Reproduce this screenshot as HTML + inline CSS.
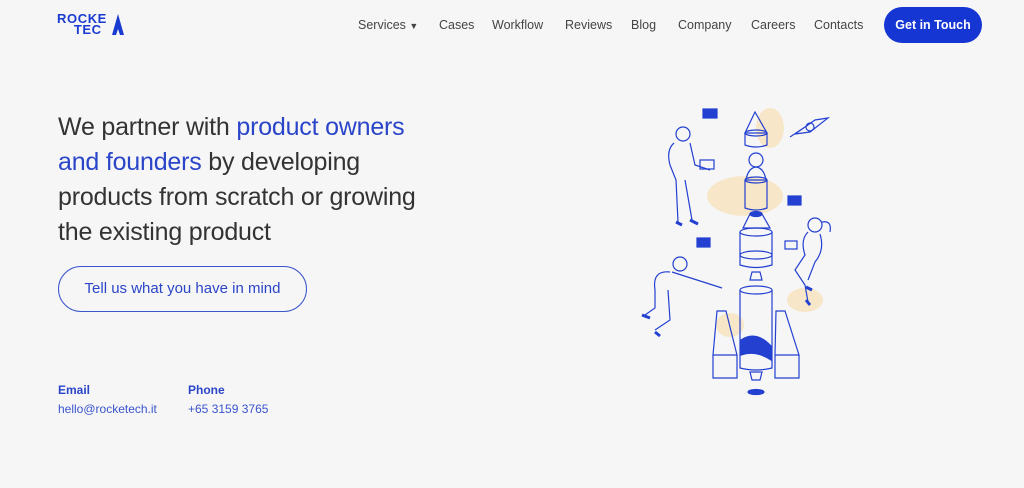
<!DOCTYPE html>
<html><head><meta charset="utf-8"><style>
body{margin:0;width:1024px;height:488px;background:#f6f6f7;font-family:"Liberation Sans",sans-serif;overflow:hidden;position:relative;color:#333}
.logo{position:absolute;left:57px;top:13px;color:#1a3bd1;font-weight:900;font-size:13px;line-height:11px;letter-spacing:.6px}
nav{position:absolute;top:18px;left:358px;font-size:12.5px;color:#444}
nav span{position:absolute;white-space:nowrap}
.btn{position:absolute;left:884px;top:7px;width:98px;height:36px;border-radius:18px;background:#1636d4;color:#fff;font-size:12.5px;font-weight:bold;text-align:center;line-height:36px}
h1{position:absolute;left:58px;top:110px;margin:0;font-weight:normal;font-size:25px;line-height:35px;color:#333;width:368px;letter-spacing:-.2px}
h1 b{font-weight:normal;color:#2a45c8}
.cta{position:absolute;left:58px;top:266px;width:249px;height:46px;border:1.5px solid #3a55cc;border-radius:24px;box-sizing:border-box;text-align:center;line-height:44px;font-size:15px;color:#2a45c8}
.c{position:absolute;top:381px;font-size:12px;line-height:19px}
.c b{color:#2a45c8;display:block}
.c span{color:#3a55cc}
</style></head><body>
<div class="logo">ROCKE<br>&nbsp;&nbsp;&nbsp;&nbsp;TEC<svg width="14" height="22" viewBox="0 0 14 22" style="position:absolute;left:54px;top:1px"><path d="M7 0 L13 21 L9 21 L7 15 L5 21 L1 21Z" fill="#1a3bd1"/></svg></div>
<nav>
<span style="left:0">Services <span style="position:static;font-size:9px">▼</span></span>
<span style="left:81px">Cases</span>
<span style="left:134px">Workflow</span>
<span style="left:207px">Reviews</span>
<span style="left:273px">Blog</span>
<span style="left:320px">Company</span>
<span style="left:393px">Careers</span>
<span style="left:456px">Contacts</span>
</nav>
<div class="btn">Get in Touch</div>
<h1>We partner with <b>product owners and founders</b> by developing products from scratch or growing the existing product</h1>
<div class="cta">Tell us what you have in mind</div>
<div class="c" style="left:58px"><b>Email</b><span>hello@rocketech.it</span></div>
<div class="c" style="left:188px"><b>Phone</b><span>+65 3159 3765</span></div>
<svg style="position:absolute;left:630px;top:100px" width="220" height="300" viewBox="630 100 220 300" fill="none" stroke="#2340d0" stroke-width="1.2">
<g fill="#f7e7c8" stroke="none"><ellipse cx="745" cy="196" rx="38" ry="20"/><ellipse cx="770" cy="128" rx="14" ry="20"/><ellipse cx="805" cy="300" rx="18" ry="12"/><ellipse cx="730" cy="325" rx="14" ry="12"/></g>
<path d="M745 133 L755 112 L767 133 Z"/><ellipse cx="756" cy="133" rx="11" ry="3"/><path d="M745 133 V145 Q756 149 767 145 V133"/>
<circle cx="756" cy="160" r="7"/><path d="M746 180 Q748 168 756 167 Q764 168 766 180 Z"/>
<path d="M745 180 V208 Q756 212 767 208 V180"/><ellipse cx="756" cy="180" rx="11" ry="3"/>
<ellipse cx="756" cy="214" rx="6" ry="2.5" fill="#2340d0"/>
<path d="M743 228 L750 214 L762 214 L770 228 Z"/>
<path d="M740 232 V265 Q756 270 772 265 V232"/><ellipse cx="756" cy="232" rx="16" ry="4"/><ellipse cx="756" cy="255" rx="16" ry="4"/>
<path d="M752 272 L760 272 L762 280 L750 280Z"/>
<path d="M740 290 V368 Q756 372 772 368 V290"/><ellipse cx="756" cy="290" rx="16" ry="4"/>
<path d="M741 340 Q756 330 771 346 V360 Q756 350 741 355Z" fill="#2340d0"/>
<path d="M717 311 L726 311 L737 355 L713 355Z"/><path d="M713 355 V378 H737 V355"/>
<path d="M776 311 L785 311 L799 355 L775 355Z"/><path d="M775 355 V378 H799 V355"/>
<path d="M750 372 L762 372 L760 380 L752 380Z"/>
<ellipse cx="756" cy="392" rx="8" ry="2.5" fill="#2340d0"/>
<path d="M790 137 L808 125 M795 134 L815 120 L828 118 L810 132Z"/><circle cx="810" cy="127" r="4"/>
<rect x="703" y="109" width="14" height="9" fill="#2340d0"/><rect x="788" y="196" width="13" height="9" fill="#2340d0"/><rect x="697" y="238" width="13" height="9" fill="#2340d0"/>
<circle cx="683" cy="134" r="7"/><path d="M674 143 Q666 150 670 165 L676 180 L678 222 M690 143 L695 165 L710 170 M685 180 L692 220"/><rect x="700" y="160" width="14" height="9"/><path d="M676 222 L682 225 M690 220 L698 224" stroke-width="3"/>
<circle cx="680" cy="264" r="7"/><path d="M670 272 Q652 270 655 290 L655 308 L645 315 M672 272 L722 288 M668 290 L670 320 L655 330"/><path d="M642 315 L650 318 M655 332 L660 336" stroke-width="3"/>
<circle cx="815" cy="225" r="7"/><path d="M822 222 Q832 220 830 232 M808 232 Q800 240 805 255 L795 270 L805 285 L808 302 M820 234 Q825 250 815 262 L808 280"/><rect x="785" y="241" width="12" height="8"/><path d="M806 287 L812 290 M806 300 L810 305" stroke-width="3"/>
</svg>
</body></html>
